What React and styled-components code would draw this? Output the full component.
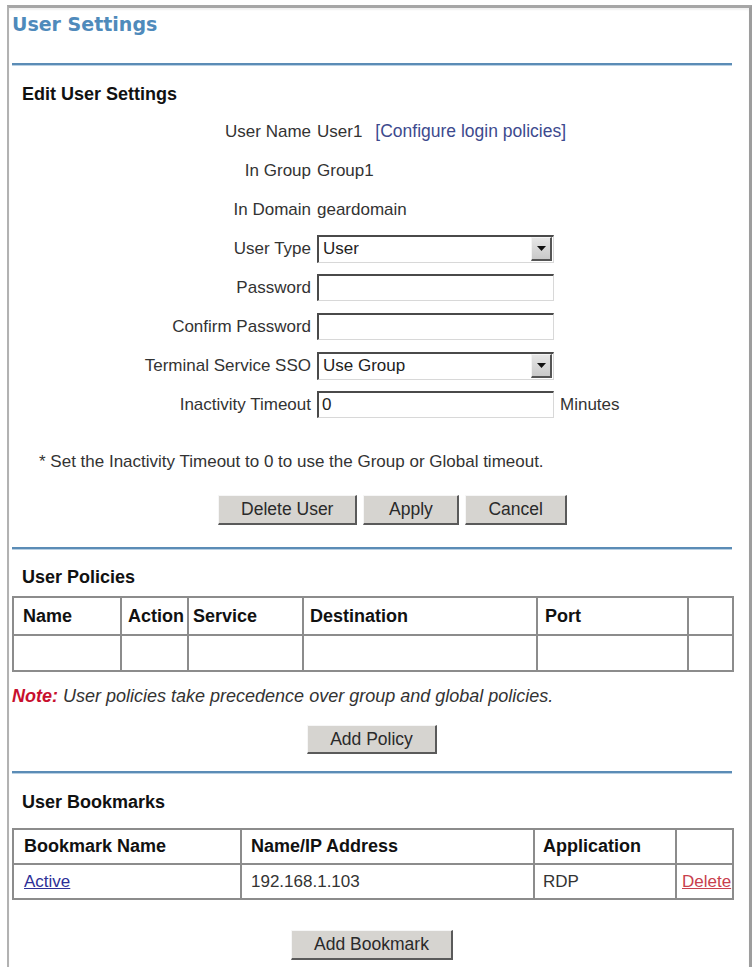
import React from "react";
import styled, { createGlobalStyle } from "styled-components";

const GlobalStyle = createGlobalStyle`
  html, body {
    margin: 0;
    background: #fff;
  }
  body {
    font-family: "Liberation Sans", Arial, sans-serif;
    color: #333;
  }
`;

const Frame = styled.div`
  box-sizing: border-box;
  margin: 5px 2px 0 7px;
  min-height: 962px;
  padding: 0 17px 0 3px;
  border-top: 3px solid #a6a6a6;
  border-left: 2px solid #b2b2b2;
  border-right: 3px solid #9d9d9d;
  box-shadow: inset 0 2px 2px rgba(0, 0, 0, 0.06);
`;

const Title = styled.h1`
  margin: 4px 0 0;
  font: bold 19px/24px "DejaVu Sans", Verdana, sans-serif;
  color: #4f8abb;
`;

const Rule = styled.div`
  height: 2px;
  margin-top: ${(p) => p.$top}px;
  background: #5b8cb6;
  border-bottom: 1px solid #b9d0e3;
`;

const Heading = styled.h2`
  margin: ${(p) => p.$top}px 0 0 10px;
  font: bold 18px/22px "Liberation Sans", Arial, sans-serif;
  color: #111;
`;

const FormGrid = styled.div`
  display: grid;
  grid-template-columns: 299px 1fr;
  grid-auto-rows: 39px;
  column-gap: 6px;
  align-items: center;
  margin-top: 7px;
  font-size: 17px;
`;

const Label = styled.div`
  text-align: right;
  color: #333;
`;

const Value = styled.div`
  display: flex;
  align-items: center;
  gap: ${(p) => p.$gap || 6}px;
  color: #333;
`;

const PolicyLink = styled.a`
  font-size: 17.5px;
  color: #3d4a8e;
  text-decoration: none;
`;

const TextInput = styled.input`
  box-sizing: border-box;
  width: 237px;
  height: 27px;
  margin: 0;
  padding: 0 3px;
  border-style: solid;
  border-width: 2px 1px 1px 2px;
  border-color: #4a4a4a #d8d8d8 #d8d8d8 #4a4a4a;
  background: #fff;
  font: 17px "Liberation Sans", Arial, sans-serif;
  color: #222;
  outline: none;
`;

const SelectBox = styled.div`
  box-sizing: border-box;
  display: flex;
  align-items: center;
  width: 237px;
  height: 28px;
  border-style: solid;
  border-width: 2px 1px 1px 2px;
  border-color: #4a4a4a #d8d8d8 #d8d8d8 #4a4a4a;
  background: #fff;
`;

const SelectText = styled.span`
  flex: 1;
  padding-left: 4px;
  font-size: 17px;
  color: #222;
`;

const SelectArrow = styled.span`
  box-sizing: border-box;
  display: flex;
  align-items: center;
  justify-content: center;
  width: 21px;
  height: 24px;
  margin-right: 1px;
  background: linear-gradient(#e6e6e6, #c9c9c9);
  border-style: solid;
  border-width: 1px 2px 2px 1px;
  border-color: #f4f4f4 #555 #555 #f4f4f4;
`;

const Hint = styled.p`
  margin: 28px 0 0 27px;
  font-size: 17px;
  line-height: 20px;
  color: #333;
`;

const ButtonRow = styled.div`
  display: flex;
  justify-content: center;
  gap: 6px;
  margin-top: ${(p) => p.$top}px;
  padding-left: ${(p) => p.$shift || 0}px;
`;

const Button = styled.button`
  box-sizing: border-box;
  min-width: ${(p) => p.$min || 0}px;
  height: ${(p) => p.$h || 30}px;
  padding: 0 22px;
  background: #d6d4d0;
  border-style: solid;
  border-width: 1px 2px 2px 1px;
  border-color: #f6f6f6 #5a5a5a #5a5a5a #f6f6f6;
  font: 17.5px "Liberation Sans", Arial, sans-serif;
  color: #2a2a2a;
`;

const DataTable = styled.table`
  width: 100%;
  table-layout: fixed;
  border-collapse: collapse;
  margin-top: ${(p) => p.$top}px;
  border: 2px solid #8c8c8c;
`;

const Col = styled.col`
  width: ${(p) => p.$w}px;
`;

const HeadCell = styled.th`
  height: ${(p) => p.$h}px;
  padding: 0 0 0 ${(p) => (p.$pad == null ? 9 : p.$pad)}px;
  border: 2px solid #8c8c8c;
  text-align: left;
  white-space: nowrap;
  overflow: hidden;
  font: bold 18px "Liberation Sans", Arial, sans-serif;
  color: #111;
`;

const Cell = styled.td`
  height: ${(p) => p.$h}px;
  padding: 0 0 0 ${(p) => (p.$pad == null ? 9 : p.$pad)}px;
  border: 2px solid #8c8c8c;
  white-space: nowrap;
  overflow: hidden;
  font-size: 17px;
  color: #333;
`;

const RowLink = styled.a`
  color: ${(p) => (p.$danger ? "#c8404e" : "#2d2f97")};
  text-decoration: underline;
`;

const Note = styled.p`
  margin: 14px 0 0;
  font-size: 18px;
  line-height: 20px;
  font-style: italic;
  color: #333;
`;

const NoteTag = styled.b`
  color: #c8102e;
`;

const DownArrow = () => (
  <svg width="9" height="5" viewBox="0 0 9 5">
    <path d="M0 0h9L4.5 5z" fill="#111" />
  </svg>
);

const Select = ({ value }) => (
  <SelectBox>
    <SelectText>{value}</SelectText>
    <SelectArrow>
      <DownArrow />
    </SelectArrow>
  </SelectBox>
);

export default function App() {
  return (
    <>
      <GlobalStyle />
      <Frame>
        <Title>User Settings</Title>

        <Rule $top={27} />
        <Heading $top={17}>Edit User Settings</Heading>
        <FormGrid>
          <Label>User Name</Label>
          <Value $gap={13}>
            <span>User1</span>
            <PolicyLink href="#">[Configure login policies]</PolicyLink>
          </Value>

          <Label>In Group</Label>
          <Value>Group1</Value>

          <Label>In Domain</Label>
          <Value>geardomain</Value>

          <Label>User Type</Label>
          <Value>
            <Select value="User" />
          </Value>

          <Label>Password</Label>
          <Value>
            <TextInput type="password" />
          </Value>

          <Label>Confirm Password</Label>
          <Value>
            <TextInput type="password" />
          </Value>

          <Label>Terminal Service SSO</Label>
          <Value>
            <Select value="Use Group" />
          </Value>

          <Label>Inactivity Timeout</Label>
          <Value>
            <TextInput defaultValue="0" />
            <span>Minutes</span>
          </Value>
        </FormGrid>

        <Hint>* Set the Inactivity Timeout to 0 to use the Group or Global timeout.</Hint>

        <ButtonRow $top={23} $shift={41}>
          <Button $min={139}>Delete User</Button>
          <Button $min={96}>Apply</Button>
          <Button $min={99}>Cancel</Button>
        </ButtonRow>

        <Rule $top={22} />
        <Heading $top={16}>User Policies</Heading>
        <DataTable $top={8}>
          <colgroup>
            <Col $w={108} />
            <Col $w={67} />
            <Col $w={115} />
            <Col $w={234} />
            <Col $w={151} />
            <Col $w={45} />
          </colgroup>
          <thead>
            <tr>
              <HeadCell $h={36}>Name</HeadCell>
              <HeadCell $h={36} $pad={6}>Action</HeadCell>
              <HeadCell $h={36} $pad={4}>Service</HeadCell>
              <HeadCell $h={36} $pad={6}>Destination</HeadCell>
              <HeadCell $h={36} $pad={7}>Port</HeadCell>
              <HeadCell $h={36} />
            </tr>
          </thead>
          <tbody>
            <tr>
              <Cell $h={34} />
              <Cell $h={34} />
              <Cell $h={34} />
              <Cell $h={34} />
              <Cell $h={34} />
              <Cell $h={34} />
            </tr>
          </tbody>
        </DataTable>

        <Note>
          <NoteTag>Note:</NoteTag> User policies take precedence over group and global policies.
        </Note>

        <ButtonRow $top={19}>
          <Button $h={29}>Add Policy</Button>
        </ButtonRow>

        <Rule $top={17} />
        <Heading $top={17}>User Bookmarks</Heading>
        <DataTable $top={15}>
          <colgroup>
            <Col $w={228} />
            <Col $w={293} />
            <Col $w={142} />
            <Col $w={57} />
          </colgroup>
          <thead>
            <tr>
              <HeadCell $h={33} $pad={10}>Bookmark Name</HeadCell>
              <HeadCell $h={33}>Name/IP Address</HeadCell>
              <HeadCell $h={33} $pad={8}>Application</HeadCell>
              <HeadCell $h={33} />
            </tr>
          </thead>
          <tbody>
            <tr>
              <Cell $h={33} $pad={10}>
                <RowLink href="#">Active</RowLink>
              </Cell>
              <Cell $h={33}>192.168.1.103</Cell>
              <Cell $h={33} $pad={8}>RDP</Cell>
              <Cell $h={33} $pad={5}>
                <RowLink href="#" $danger>
                  Delete
                </RowLink>
              </Cell>
            </tr>
          </tbody>
        </DataTable>

        <ButtonRow $top={30}>
          <Button>Add Bookmark</Button>
        </ButtonRow>
      </Frame>
    </>
  );
}
